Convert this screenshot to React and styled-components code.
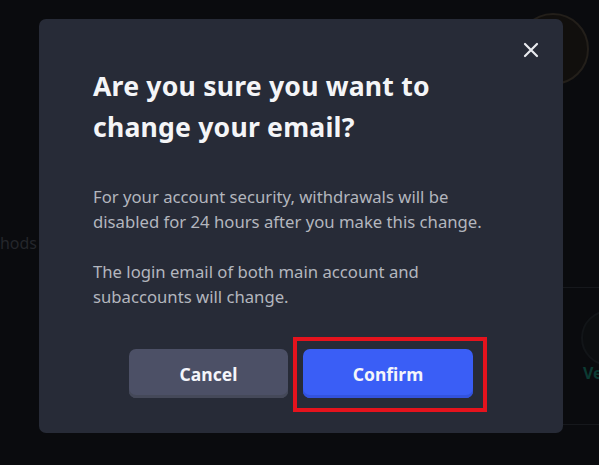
import React from 'react';
import styled, { createGlobalStyle } from 'styled-components';

const GlobalStyle = createGlobalStyle`
  html, body {
    margin: 0;
    padding: 0;
    width: 100%;
    height: 100%;
    background: #0a0b0e;
    overflow: hidden;
  }
  body {
    font-family: "Noto Sans", "DejaVu Sans", sans-serif;
  }
`;

const Page = styled.div`
  position: relative;
  width: 599px;
  height: 465px;
  background: #0a0b0e;
  overflow: hidden;
`;

// faint page content behind the dialog
const Behind = styled.div`
  position: absolute;
  inset: 0;
  display: grid;
  grid-template-columns: 40px 1fr 40px;
`;

const SideLeft = styled.div`
  display: flex;
  align-items: center;
  justify-content: flex-end;
  overflow: hidden;
  padding: 20px 3px 0 0;
  font-size: 16px;
  color: #24262b;
  white-space: nowrap;
`;

const SideRight = styled.div`
  display: flex;
  flex-direction: column;
  overflow: visible;
`;

const Ring = styled.div`
  flex: none;
  width: ${p => p.size}px;
  height: ${p => p.size}px;
  margin: ${p => p.m};
  border-radius: 50%;
  border: 2px solid ${p => p.ring};
  background: ${p => p.fill};
`;

const Divider = styled.div`
  height: 1px;
  margin-top: ${p => p.mt}px;
  background: #16181c;
`;

const VerifyLabel = styled.span`
  margin: -4px 0 0 24px;
  font-size: 16px;
  font-weight: 700;
  color: #0c3b33;
  white-space: nowrap;
`;

const Overlay = styled.div`
  position: absolute;
  inset: 0;
  padding: 19px 0 0 39px;
`;

const Dialog = styled.div`
  position: relative;
  width: 524px;
  height: 414px;
  box-sizing: border-box;
  background: #272b37;
  border-radius: 7px;
  padding: 47px 54px 0 54px;
  display: flex;
  flex-direction: column;
`;

const CloseButton = styled.button`
  position: absolute;
  top: 19px;
  right: 20px;
  width: 24px;
  height: 24px;
  padding: 0;
  border: 0;
  background: transparent;
  display: flex;
  align-items: center;
  justify-content: center;
  cursor: pointer;
`;

const Title = styled.h2`
  margin: 0;
  font-size: 26.6px;
  line-height: 41px;
  font-weight: 700;
  color: #f4f5f7;
  letter-spacing: 0.2px;
`;

const Body = styled.div`
  margin-top: 36px;
  display: flex;
  flex-direction: column;
  gap: 25px;
`;

const Para = styled.p`
  margin: 0;
  font-size: 16.7px;
  line-height: 25px;
  color: #b3b6be;
`;

const Actions = styled.div`
  margin-top: 40px;
  display: flex;
  justify-content: center;
  gap: 15px;
`;

const Button = styled.button`
  position: relative;
  width: ${p => p.w}px;
  height: 49px;
  border: 0;
  border-radius: 7px;
  font-family: inherit;
  font-size: 17.5px;
  font-weight: 700;
  color: #f4f5fa;
  cursor: pointer;
  background: ${p => (p.primary ? '#3a5ef6' : '#4c5066')};
  box-shadow: inset 0 -3px 0 ${p => (p.primary ? '#3353de' : '#454959')};
`;

const Highlight = styled.div`
  position: absolute;
  left: -10px;
  top: -12px;
  right: -14px;
  bottom: -14px;
  border: 4px solid #e5131d;
  pointer-events: none;
`;

export default function App() {
  return (
    <Page>
      <GlobalStyle />
      <Behind>
        <SideLeft>Methods</SideLeft>
        <div />
        <SideRight>
          <Ring size={68} m="13px 0 0 -42px" ring="#231f1a" fill="#110f0d" />
          <Divider mt={202} />
          <Ring size={52} m="22px 0 0 22px" ring="#121518" fill="#0c0e10" />
          <VerifyLabel>Ve</VerifyLabel>
          <Divider mt={40} />
        </SideRight>
      </Behind>
      <Overlay>
        <Dialog>
          <CloseButton aria-label="Close">
            <svg width="16" height="16" viewBox="0 0 16 16">
              <path d="M2 2L14 14M14 2L2 14" stroke="#e8eaee" strokeWidth="2.2" strokeLinecap="round" />
            </svg>
          </CloseButton>
          <Title>Are you sure you want to change your email?</Title>
          <Body>
            <Para>For your account security, withdrawals will be disabled for 24 hours after you make this change.</Para>
            <Para>The login email of both main account and subaccounts will change.</Para>
          </Body>
          <Actions>
            <Button w={159}>Cancel</Button>
            <Button w={170} primary>
              Confirm
              <Highlight />
            </Button>
          </Actions>
        </Dialog>
      </Overlay>
    </Page>
  );
}
